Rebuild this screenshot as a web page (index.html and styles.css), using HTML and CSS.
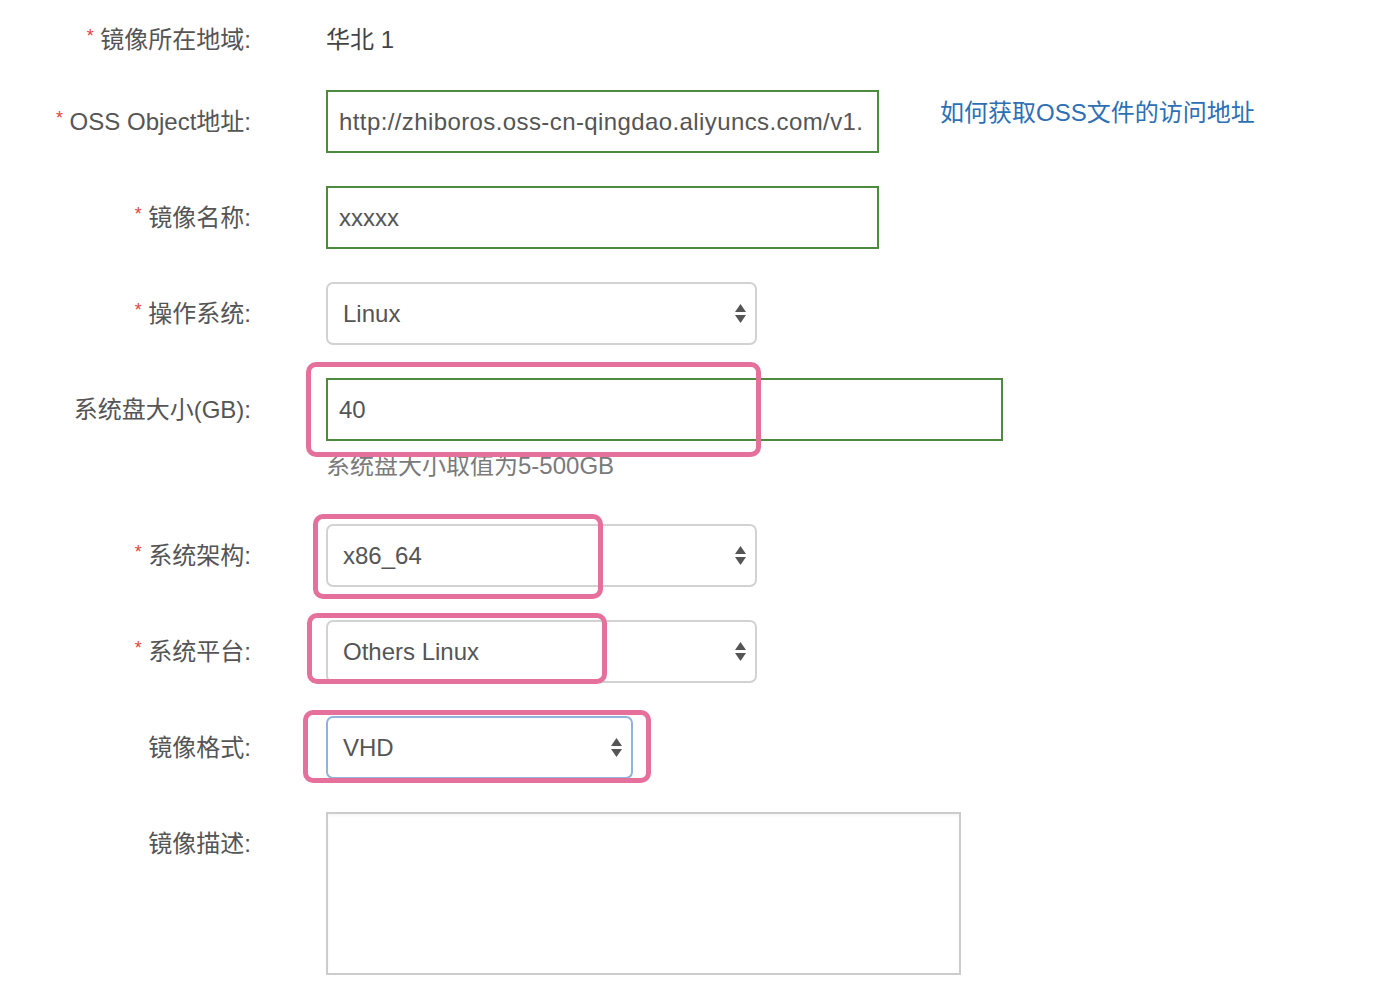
FILE: index.html
```html
<!DOCTYPE html>
<html lang="zh-CN">
<head>
<meta charset="utf-8">
<title>导入镜像</title>
<link rel="stylesheet" href="styles.css">
</head>
<body>
<form class="form">
  <div class="row row-static">
    <div class="label"><span class="req">*</span> 镜像所在地域:</div>
    <div class="field"><span class="static">华北 1</span></div>
  </div>

  <div class="row">
    <div class="label"><span class="req">*</span> OSS Object地址:</div>
    <div class="field field-with-link">
      <input class="input input-md input-url" type="text" value="http://zhiboros.oss-cn-qingdao.aliyuncs.com/v1.1.vhd">
      <a class="help-link" href="#">如何获取OSS文件的访问地址</a>
    </div>
  </div>

  <div class="row">
    <div class="label"><span class="req">*</span> 镜像名称:</div>
    <div class="field">
      <input class="input input-md" type="text" value="xxxxx">
    </div>
  </div>

  <div class="row">
    <div class="label"><span class="req">*</span> 操作系统:</div>
    <div class="field">
      <div class="select select-md">
        <span class="select-text">Linux</span>
        <svg class="caret" width="11" height="19" viewBox="0 0 11 19"><polygon points="0,8 5.5,0 11,8"/><polygon points="0,11 11,11 5.5,19"/></svg>
      </div>
    </div>
  </div>

  <div class="row">
    <div class="label">系统盘大小(GB):</div>
    <div class="field field-stack">
      <input class="input input-lg" type="text" value="40">
      <div class="hint">系统盘大小取值为5-500GB</div>
      <div class="mark mark-disk"></div>
    </div>
  </div>

  <div class="row">
    <div class="label"><span class="req">*</span> 系统架构:</div>
    <div class="field">
      <div class="select select-md">
        <span class="select-text">x86_64</span>
        <svg class="caret" width="11" height="19" viewBox="0 0 11 19"><polygon points="0,8 5.5,0 11,8"/><polygon points="0,11 11,11 5.5,19"/></svg>
      </div>
      <div class="mark mark-arch"></div>
    </div>
  </div>

  <div class="row">
    <div class="label"><span class="req">*</span> 系统平台:</div>
    <div class="field">
      <div class="select select-md">
        <span class="select-text">Others Linux</span>
        <svg class="caret" width="11" height="19" viewBox="0 0 11 19"><polygon points="0,8 5.5,0 11,8"/><polygon points="0,11 11,11 5.5,19"/></svg>
      </div>
      <div class="mark mark-platform"></div>
    </div>
  </div>

  <div class="row">
    <div class="label">镜像格式:</div>
    <div class="field">
      <div class="select select-sm select-focus">
        <span class="select-text">VHD</span>
        <svg class="caret" width="11" height="19" viewBox="0 0 11 19"><polygon points="0,8 5.5,0 11,8"/><polygon points="0,11 11,11 5.5,19"/></svg>
      </div>
      <div class="mark mark-format"></div>
    </div>
  </div>

  <div class="row">
    <div class="label">镜像描述:</div>
    <div class="field">
      <textarea class="textarea"></textarea>
    </div>
  </div>
</form>
</body>
</html>
```

FILE: styles.css
```css
* {
  box-sizing: border-box;
}

html, body {
  margin: 0;
  padding: 0;
  background: #ffffff;
}

body {
  font-family: "Liberation Sans", "Noto Sans CJK SC", sans-serif;
  font-size: 24px;
  color: #555555;
}

.form {
  display: flex;
  flex-direction: column;
  gap: 33px;
  padding-top: 23px;
}

.row {
  display: flex;
  align-items: flex-start;
}

.label {
  width: 251px;
  height: 63px;
  flex-shrink: 0;
  text-align: right;
  line-height: 63px;
  color: #555555;
  white-space: nowrap;
}

.row-static .label,
.row-static .field {
  height: 34px;
  line-height: 34px;
}

.req {
  color: #e0443c;
  font-size: 18px;
  line-height: 0;
  vertical-align: 6px;
}

.field {
  position: relative;
  margin-left: 75px;
  display: flex;
  align-items: flex-start;
}

.field-stack {
  flex-direction: column;
}

.static {
  color: #444444;
}

.input {
  height: 63px;
  border: 2px solid #4f8b3f;
  border-radius: 0;
  padding: 0 12px 0 11px;
  font-family: inherit;
  font-size: 24px;
  color: #555555;
  background: #ffffff;
  outline: none;
}

.input-url {
  letter-spacing: 0.4px;
}

.input-md {
  width: 553px;
}

.input-lg {
  width: 677px;
}

.help-link {
  margin-left: 61px;
  margin-top: 8px;
  line-height: 30px;
  color: #2e6fb4;
  text-decoration: none;
  white-space: nowrap;
}

.hint {
  margin-top: 10px;
  margin-bottom: 10px;
  line-height: 30px;
  color: #7a7a7a;
}

.select {
  height: 63px;
  display: flex;
  align-items: center;
  justify-content: space-between;
  padding: 0 9px 0 15px;
  border: 2px solid #d2d2d2;
  border-radius: 7px;
  background: #ffffff;
  color: #555555;
}

.select-md {
  width: 431px;
}

.select-sm {
  width: 307px;
}

.select-focus {
  border-color: #8fb3dd;
}

.caret {
  display: block;
  fill: #555555;
}

.textarea {
  display: block;
  width: 635px;
  height: 163px;
  border: 2px solid #cccccc;
  border-radius: 0;
  box-shadow: inset 0 2px 3px rgba(0, 0, 0, 0.04);
  resize: none;
  font-family: inherit;
  font-size: 24px;
  outline: none;
}

.mark {
  position: absolute;
  border: 5px solid #e4709b;
  border-radius: 10px;
  pointer-events: none;
}

.mark-disk {
  left: -20px;
  top: -16px;
  width: 455px;
  height: 95px;
}

.mark-arch {
  left: -13px;
  top: -10px;
  width: 290px;
  height: 85px;
}

.mark-platform {
  left: -19px;
  top: -7px;
  width: 300px;
  height: 71px;
}

.mark-format {
  left: -23px;
  top: -6px;
  width: 348px;
  height: 73px;
}
```
